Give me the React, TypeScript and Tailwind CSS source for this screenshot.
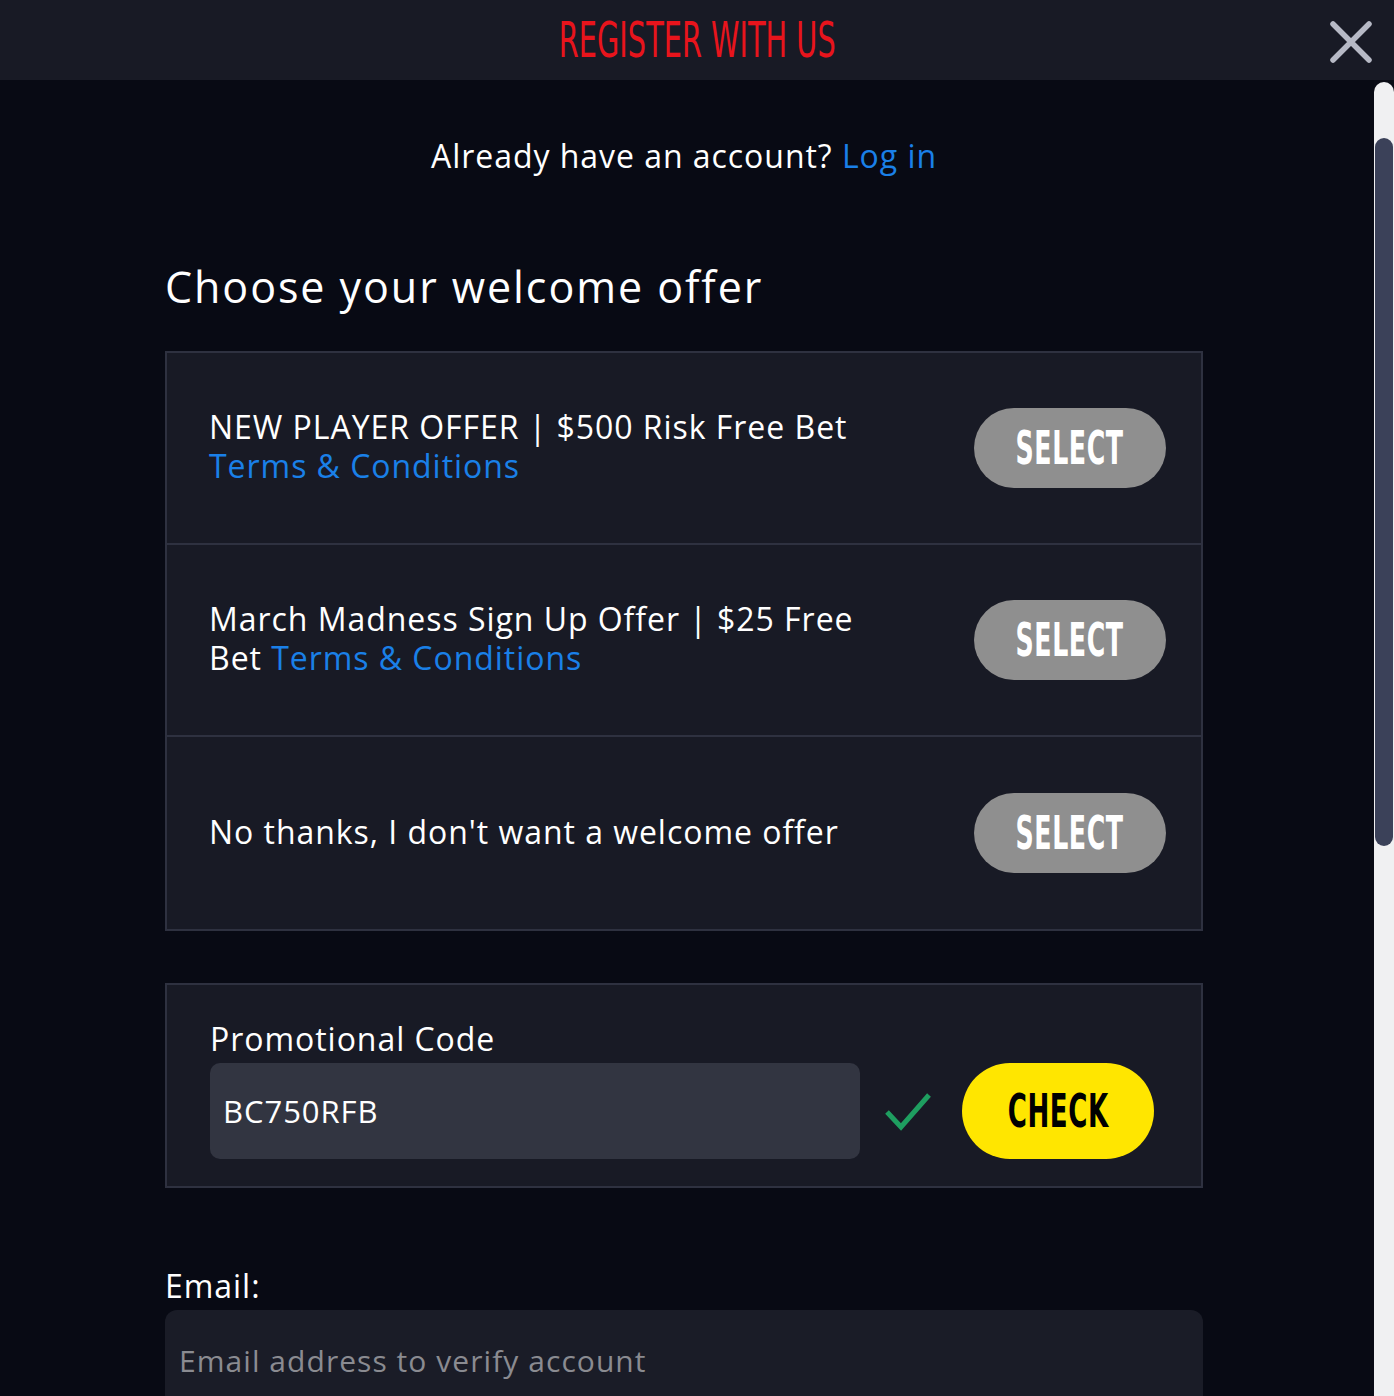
import React from 'react';

const body = { fontFamily: '"Open Sans", "Noto Sans", sans-serif' };
const cond = { fontFamily: '"Liberation Sans Narrow", "DejaVu Sans Condensed", sans-serif' };

const offers = [
  { id: 1, lines: ['NEW PLAYER OFFER | $500 Risk Free Bet', ''], terms: true },
  { id: 2, lines: ['March Madness Sign Up Offer | $25 Free', 'Bet '], terms: true },
  { id: 3, lines: ["No thanks, I don't want a welcome offer"], terms: false },
];

const SelectButton = () => (
  <button className="w-[192px] h-[80px] rounded-full bg-[#8f8f8f] flex items-center justify-center shrink-0">
    <span style={cond} className="inline-block text-white font-bold text-[46px] leading-none scale-x-[0.61]">SELECT</span>
  </button>
);

const App: React.FC = () => {
  return (
    <div style={body} className="w-[1394px] h-[1396px] overflow-hidden bg-[#080a14] flex flex-col">
      <header className="h-[80px] shrink-0 bg-[#181a25] flex items-center justify-center relative">
        <h1 style={cond} className="inline-block text-[#e8141c] text-[50px] leading-none scale-x-[0.64]">REGISTER WITH US</h1>
        <button className="absolute right-[22px] top-[21px] w-[42px] h-[42px]">
          <svg viewBox="0 0 42 42" className="w-full h-full">
            <path d="M3 3 L39 39 M39 3 L3 39" stroke="#b6b9c5" strokeWidth="5.5" strokeLinecap="round" />
          </svg>
        </button>
      </header>

      <div className="flex flex-1 min-h-0">
        <main className="flex-1 pl-[165px] flex flex-col tracking-[0.06em] overflow-hidden">
          <p className="shrink-0 mt-[56px] w-[1038px] text-center text-[32px] leading-[40px] text-white">
            Already have an account? <span className="text-[#1a80e8]">Log in</span>
          </p>

          <h2 className="shrink-0 mt-[85px] text-[43px] leading-[52px] text-white tracking-[0.045em]">Choose your welcome offer</h2>

          <div className="shrink-0 mt-[38px] w-[1038px] border-2 border-[#2e3140] bg-[#181a25] divide-y-2 divide-[#2e3140]">
            {offers.map(o => (
              <div key={o.id} className="h-[192px] flex items-center justify-between pl-[42px] pr-[35px]">
                <p className="-mt-[4px] text-[32px] leading-[39px] text-white whitespace-nowrap">
                  {o.lines[0]}
                  {o.terms && <br />}
                  {o.terms && o.lines[1]}
                  {o.terms && <span className="text-[#1a80e8]">Terms &amp; Conditions</span>}
                </p>
                <SelectButton />
              </div>
            ))}
          </div>

          <div className="shrink-0 mt-[52px] w-[1038px] border-2 border-[#2e3140] bg-[#181a25] pt-[34px] pb-[27px] pl-[43px] pr-[47px]">
            <p className="text-[32px] leading-[40px] text-white">Promotional Code</p>
            <div className="mt-[4px] flex items-center">
              <div className="w-[650px] h-[96px] rounded-[10px] bg-[#323541] flex items-center px-[13px] text-[31px] text-white">BC750RFB</div>
              <svg viewBox="0 0 48 40" className="ml-[24px] w-[48px] h-[40px]">
                <path d="M3 21 L17 36 L45 4" fill="none" stroke="#1e9e60" strokeWidth="5" />
              </svg>
              <button className="ml-[30px] w-[192px] h-[96px] rounded-full bg-[#ffe600] flex items-center justify-center">
                <span style={cond} className="inline-block text-black font-bold text-[46px] leading-none scale-x-[0.63]">CHECK</span>
              </button>
            </div>
          </div>

          <p className="shrink-0 mt-[78px] text-[32px] leading-[40px] text-white">Email:</p>
          <div className="shrink-0 mt-[4px] w-[1038px] h-[100px] rounded-[12px] bg-[#1a1c27] flex items-center px-[14px] text-[30px] tracking-[0.035em] text-[#8a8b91]">
            Email address to verify account
          </div>
        </main>

        <div className="w-[20px] shrink-0 bg-[#0a0c16] flex flex-col pt-[2px]">
          <div className="flex-1 bg-[#f0f0f2] rounded-t-full flex flex-col pt-[56px]">
            <div className="h-[708px] bg-[#3b4159] rounded-full mx-[1px]" />
          </div>
        </div>
      </div>
    </div>
  );
};

export default App;
